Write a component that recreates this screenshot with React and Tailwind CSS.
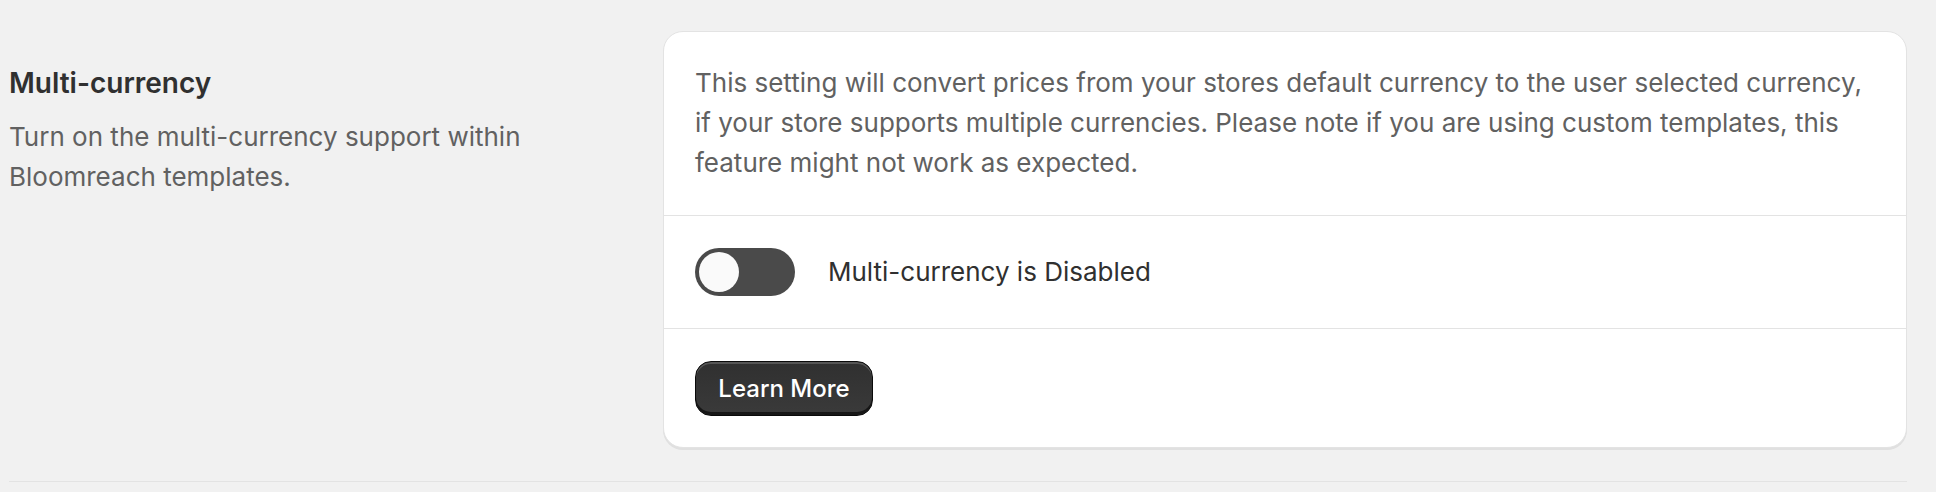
// Multi-currency settings section
function Toggle({ on = false }) {
  return (
    <div
      className={`flex h-[48px] w-[100px] shrink-0 items-center rounded-full p-[4px] ${
        on ? "justify-end bg-[#303030]" : "justify-start bg-[#4a4a4a]"
      }`}
    >
      <div className="h-[40px] w-[40px] rounded-full bg-[#fafafa]" />
    </div>
  );
}

function App() {
  return (
    <div
      className="h-[492px] w-full bg-[#f1f1f1] pl-[9px] pr-[29px] pt-[31px]"
      style={{ fontFamily: "Inter, 'Noto Sans', sans-serif" }}
    >
      <div className="flex gap-[33px] pb-[33px] border-b border-[#e3e3e3]">
        {/* Annotation */}
        <div className="w-[621px] shrink-0 pt-[32px]">
          <h2 className="text-[28px] leading-[40px] font-semibold text-[#303030]">
            Multi-currency
          </h2>
          <p className="mt-[14px] text-[26px] leading-[40px] text-[#616161]">
            Turn on the multi-currency support within Bloomreach templates.
          </p>
        </div>

        {/* Card */}
        <div className="flex-1 overflow-hidden rounded-[20px] border border-[#e3e3e3] bg-white shadow-[0_2px_0_rgba(0,0,0,0.07)]">
          <div className="px-[31px] pt-[31px] pb-[32px] text-[26px] leading-[40px] text-[#616161]">
            This setting will convert prices from your stores default currency
            to the user selected currency, if your store supports multiple
            currencies. Please note if you are using custom templates, this
            feature might not work as expected.
          </div>
          <div className="flex items-center gap-[33px] border-t border-[#e3e3e3] px-[31px] py-[32px]">
            <Toggle />
            <span className="text-[26px] leading-[40px] text-[#303030]">
              Multi-currency is Disabled
            </span>
          </div>
          <div className="border-t border-[#e3e3e3] px-[31px] pt-[32px] pb-[31px]">
            <button className="h-[55px] w-[178px] rounded-[16px] border border-[#0a0a0a] bg-gradient-to-b from-[#303030] to-[#3a3a3a] text-[24px] font-[550] text-white shadow-[inset_0_2px_0_rgba(255,255,255,0.18),inset_0_-3px_0_rgba(0,0,0,0.6)]">
              Learn More
            </button>
          </div>
        </div>
      </div>
    </div>
  );
}

export default App;
